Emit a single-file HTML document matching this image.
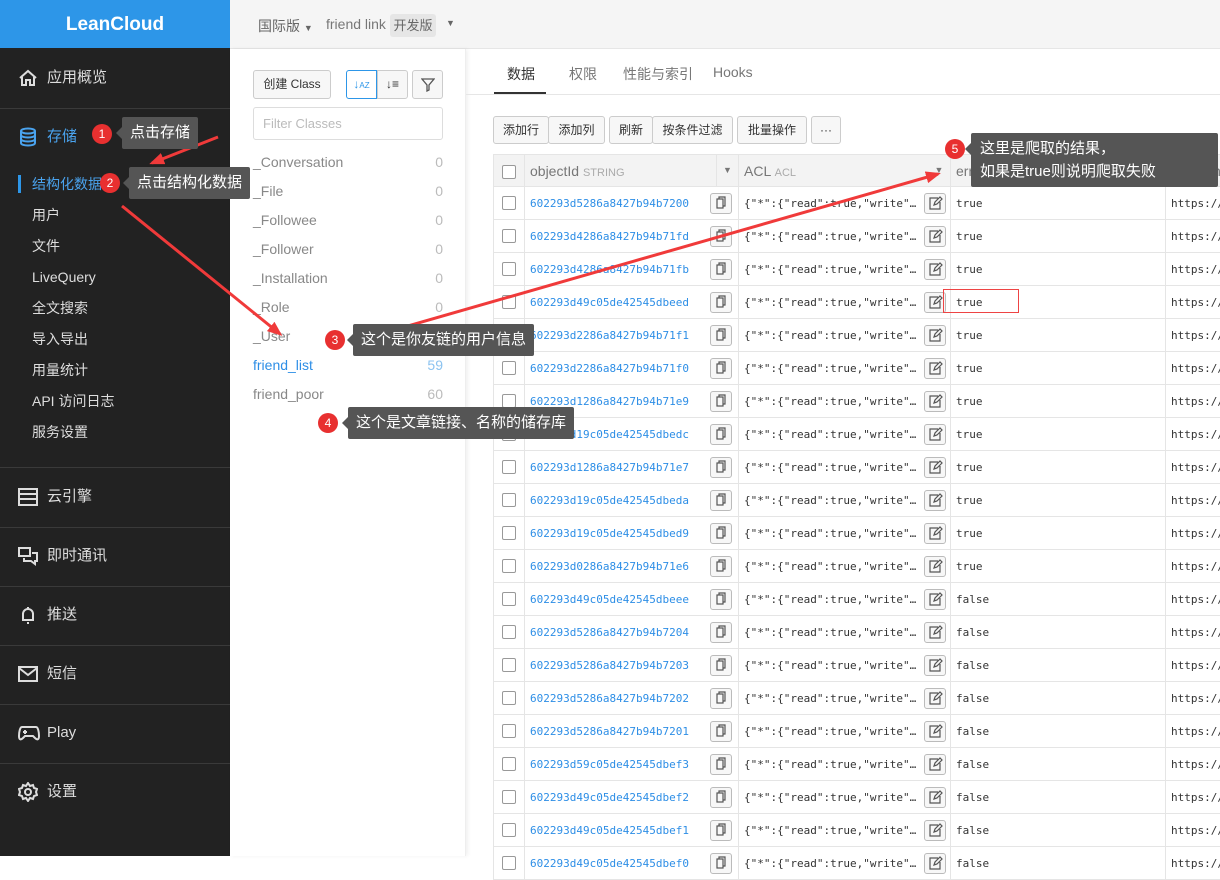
<!DOCTYPE html>
<html><head><meta charset="utf-8"><style>
*{box-sizing:border-box;margin:0;padding:0}
body{width:1220px;height:856px;overflow:hidden;position:relative;font-family:"Liberation Sans","Noto Sans CJK SC",sans-serif;background:#fff;font-size:14px}
.a{position:absolute}
#side{left:0;top:0;width:230px;height:856px;background:#222}
#logo{left:0;top:0;width:230px;height:48px;background:#2d96e8;color:#fff;font-weight:bold;font-size:19px;text-align:center;line-height:50px}
.mi{left:0;width:230px;color:#ddd;font-size:15px;height:20px;line-height:20px}
.mi svg{position:absolute;left:18px;top:0}
.mi span{position:absolute;left:47px}
.dv{left:0;width:230px;height:1px;background:#3a3a3a}
.si{left:32px;color:#ddd;font-size:14px;line-height:18px}
#top{left:230px;top:0;width:990px;height:49px;background:#f5f5f5;border-bottom:1px solid #e6e6e6;color:#666;font-size:14px}
#cp{left:230px;top:49px;width:236px;height:807px;background:#fff;box-shadow:2px 0 4px rgba(0,0,0,.06);border-right:1px solid #eee}
.btn{border:1px solid #ccc;border-radius:3px;background:#f7f7f7;color:#333;font-size:12px;text-align:center;line-height:26px;height:28px}
.cl{left:253px;color:#888;font-size:14px}
.cn{left:420px;width:23px;text-align:right;color:#bbb;font-size:14px}
.tab{top:64px;color:#777;font-size:14px}
table{border-collapse:collapse;position:absolute;left:493px;top:154px;font-size:11px;table-layout:fixed;width:760px}
td{border:1px solid #e5e5e5;height:33px;padding:0 5px;white-space:nowrap;overflow:hidden;position:relative}
th{border:1px solid #e5e5e5;height:32px;background:#f3f3f3;font-weight:normal;text-align:left;padding:0 5px;color:#777;font-size:14px;position:relative;white-space:nowrap;overflow:hidden}
.cb{width:14px;height:14px;border:1px solid #999;border-radius:2px;display:inline-block;vertical-align:middle;background:#fff}
.id{color:#2d8ee6;font-family:"DejaVu Sans Mono","Liberation Mono",monospace;font-size:11px}
.mono{font-family:"DejaVu Sans Mono","Liberation Mono",monospace;font-size:11px;color:#333}
.ib{position:absolute;right:6px;top:6px;width:22px;height:21px;border:1px solid #bbb;border-radius:3px;background:#f7f7f7}
.co{background:#555;color:#fff;font-size:15px;line-height:32px;padding:0 8px;border-radius:2px}
.co:before{content:"";position:absolute;left:-6px;top:10px;border:6px solid transparent;border-left:0;border-right-color:#555}
.num{width:20px;height:20px;border-radius:50%;background:#e83030;color:#fff;font-size:12px;text-align:center;line-height:20px}
</style></head><body>
<div id="side" class="a"></div>
<div id="logo" class="a">LeanCloud</div>
<div class="a mi" style="top:68px"><svg width="20" height="20" viewBox="0 0 20 20" fill="none" stroke="#ddd" stroke-width="2"><path d="M2 10L10 3l8 7M4 9v8h4v-5h4v5h4V9"/></svg><span>应用概览</span></div>
<div class="a dv" style="top:108px"></div>
<div class="a mi" style="top:127px;color:#4aa3ee"><svg width="20" height="20" viewBox="0 0 20 20" fill="none" stroke="#4aa3ee" stroke-width="2"><ellipse cx="10" cy="4" rx="7" ry="2.5"/><path d="M3 4v12c0 1.5 3 2.5 7 2.5s7-1 7-2.5V4M3 8c0 1.5 3 2.5 7 2.5s7-1 7-2.5M3 12c0 1.5 3 2.5 7 2.5s7-1 7-2.5"/></svg><span>存储</span></div>
<div class="a" style="left:18px;top:175px;width:3px;height:18px;background:#2d96e8"></div>
<div class="a si" style="top:175px;color:#4aa3ee">结构化数据</div>
<div class="a si" style="top:206px">用户</div>
<div class="a si" style="top:237px">文件</div>
<div class="a si" style="top:268px">LiveQuery</div>
<div class="a si" style="top:299px">全文搜索</div>
<div class="a si" style="top:330px">导入导出</div>
<div class="a si" style="top:361px">用量统计</div>
<div class="a si" style="top:392px">API 访问日志</div>
<div class="a si" style="top:423px">服务设置</div>
<div class="a dv" style="top:467px"></div>
<div class="a mi" style="top:487px"><svg width="20" height="20" viewBox="0 0 20 20" fill="none" stroke="#ddd" stroke-width="2"><rect x="1" y="2" width="18" height="16"/><path d="M1 7h18M1 12h18"/></svg><span>云引擎</span></div>
<div class="a dv" style="top:527px"></div>
<div class="a mi" style="top:546px"><svg width="20" height="20" viewBox="0 0 20 20" fill="none" stroke="#ddd" stroke-width="2"><rect x="1" y="2" width="11" height="8"/><path d="M6 12v3h7l4 3v-3h2V7h-5"/></svg><span>即时通讯</span></div>
<div class="a dv" style="top:586px"></div>
<div class="a mi" style="top:605px"><svg width="20" height="20" viewBox="0 0 20 20" fill="none" stroke="#ddd" stroke-width="2"><path d="M5 15V9a5 5 0 0 1 10 0v6H4h12M9 18h2M10 2v2"/></svg><span>推送</span></div>
<div class="a dv" style="top:645px"></div>
<div class="a mi" style="top:664px"><svg width="20" height="20" viewBox="0 0 20 20" fill="none" stroke="#ddd" stroke-width="2"><rect x="1" y="3" width="18" height="14"/><path d="M1 4l9 7 9-7"/></svg><span>短信</span></div>
<div class="a dv" style="top:704px"></div>
<div class="a mi" style="top:723px"><svg width="22" height="20" viewBox="0 0 22 20" fill="none" stroke="#ddd" stroke-width="2"><path d="M4 4h14c2 0 3 5 3 9s-2 4-4 2l-2-2H7l-2 2c-2 2-4 2-4-2s1-9 3-9zM5 9h4M7 7v4"/></svg><span>Play</span></div>
<div class="a dv" style="top:763px"></div>
<div class="a mi" style="top:782px"><svg width="20" height="20" viewBox="0 0 20 20" fill="none" stroke="#ddd" stroke-width="2"><circle cx="10" cy="10" r="3"/><path d="M10 1l2 3 3-1 1 3 3 1-1 3 1 3-3 1-1 3-3-1-2 3-2-3-3 1-1-3-3-1 1-3-1-3 3-1 1-3 3 1z"/></svg><span>设置</span></div>

<div id="top" class="a"></div>
<div class="a" style="left:258px;top:16px;color:#666;font-size:14px">国际版 <span style="font-size:9px">▼</span></div>
<div class="a" style="left:326px;top:16px;color:#777;font-size:14px">friend link</div>
<div class="a" style="left:390px;top:14px;width:46px;height:23px;background:#e6e6e6;border-radius:3px;color:#666;font-size:13px;text-align:center;line-height:23px">开发版</div>
<div class="a" style="left:446px;top:18px;font-size:9px;color:#666">▼</div>

<div id="cp" class="a"></div>
<div class="a btn" style="left:253px;top:70px;width:78px;height:29px;line-height:27px">创建 Class</div>
<div class="a btn" style="left:346px;top:70px;width:31px;height:29px;border-color:#2d96e8;background:#fff;color:#2d96e8;border-radius:3px 0 0 3px">↓<span style="font-size:8px">AZ</span></div>
<div class="a btn" style="left:377px;top:70px;width:31px;height:29px;border-radius:0 3px 3px 0">↓≡</div>
<div class="a btn" style="left:412px;top:70px;width:31px;height:29px"><svg width="14" height="14" viewBox="0 0 14 14" style="margin-top:7px" fill="none" stroke="#555" stroke-width="1.3"><path d="M1 1h12L8 7v5L6 13V7z"/></svg></div>
<div class="a" style="left:253px;top:107px;width:190px;height:33px;border:1px solid #ddd;border-radius:3px;color:#bbb;font-size:13px;line-height:31px;padding-left:9px">Filter Classes</div>
<div class="a cl" style="top:154px">_Conversation</div><div class="a cn" style="top:154px">0</div>
<div class="a cl" style="top:183px">_File</div><div class="a cn" style="top:183px">0</div>
<div class="a cl" style="top:212px">_Followee</div><div class="a cn" style="top:212px">0</div>
<div class="a cl" style="top:241px">_Follower</div><div class="a cn" style="top:241px">0</div>
<div class="a cl" style="top:270px">_Installation</div><div class="a cn" style="top:270px">0</div>
<div class="a cl" style="top:299px">_Role</div><div class="a cn" style="top:299px">0</div>
<div class="a cl" style="top:328px">_User</div><div class="a cn" style="top:328px">0</div>
<div class="a cl" style="top:357px;color:#2d8ee6">friend_list</div><div class="a cn" style="top:357px;color:#8cc3f0">59</div>
<div class="a cl" style="top:386px">friend_poor</div><div class="a cn" style="top:386px">60</div>

<div class="a tab" style="left:507px;color:#333">数据</div>
<div class="a" style="left:494px;top:92px;width:52px;height:2px;background:#333"></div>
<div class="a tab" style="left:569px">权限</div>
<div class="a tab" style="left:623px">性能与索引</div>
<div class="a tab" style="left:713px">Hooks</div>
<div class="a" style="left:466px;top:94px;width:754px;height:1px;background:#e6e6e6"></div>

<div class="a btn" style="left:493px;top:116px;width:56px">添加行</div>
<div class="a btn" style="left:548px;top:116px;width:57px">添加列</div>
<div class="a btn" style="left:609px;top:116px;width:44px">刷新</div>
<div class="a btn" style="left:652px;top:116px;width:81px">按条件过滤</div>
<div class="a btn" style="left:737px;top:116px;width:70px">批量操作</div>
<div class="a btn" style="left:811px;top:116px;width:30px">···</div>

<table>
<colgroup><col style="width:31px"><col style="width:214px"><col style="width:212px"><col style="width:215px"><col style="width:88px"></colgroup>
<tr><th style="text-align:center"><span class="cb"></span></th><th>objectId <span style="font-size:11px;color:#aaa">STRING</span><span style="position:absolute;right:0;top:0;width:22px;height:31px;border-left:1px solid #e5e5e5;font-size:9px;line-height:31px;text-align:center">▼</span></th><th>ACL <span style="font-size:11px;color:#aaa">ACL</span><span style="position:absolute;right:0;top:0;width:22px;height:31px;font-size:9px;line-height:31px;text-align:center">▼</span></th><th>error</th><th>firendimg</th></tr>
<tbody id="tb"></tbody>
</table>
<script>
var ids=["602293d5286a8427b94b7200","602293d4286a8427b94b71fd","602293d4286a8427b94b71fb","602293d49c05de42545dbeed","602293d2286a8427b94b71f1","602293d2286a8427b94b71f0","602293d1286a8427b94b71e9","602293d19c05de42545dbedc","602293d1286a8427b94b71e7","602293d19c05de42545dbeda","602293d19c05de42545dbed9","602293d0286a8427b94b71e6","602293d49c05de42545dbeee","602293d5286a8427b94b7204","602293d5286a8427b94b7203","602293d5286a8427b94b7202","602293d5286a8427b94b7201","602293d59c05de42545dbef3","602293d49c05de42545dbef2","602293d49c05de42545dbef1","602293d49c05de42545dbef0"];
var h="";
var cp='<span class="ib"><svg width="20" height="19" viewBox="0 0 20 19" fill="none" stroke="#555" stroke-width="1.2"><rect x="6" y="5" width="6" height="9"/><path d="M8 5V3h6v9h-2"/></svg></span>';
var ed='<span class="ib" style="right:4px"><svg width="20" height="19" viewBox="0 0 20 19" fill="none" stroke="#555" stroke-width="1.2"><path d="M13 4H5v11h10V8M9 11l1-3 5-5 2 2-5 5z"/></svg></span>';
ids.forEach(function(id,i){h+='<tr><td style="text-align:center"><span class="cb"></span></td><td><span class="id">'+id+'</span>'+cp+'</td><td><span class="mono">{"*":{"read":true,"write"…</span>'+ed+'</td><td><span class="mono">'+(i<12?'true':'false')+'</span></td><td><span class="mono">https://</span></td></tr>'});
document.getElementById('tb').innerHTML=h;
</script>
<div class="a" style="left:943px;top:289px;width:76px;height:24px;border:1px solid #e44"></div>

<svg class="a" style="left:0;top:0" width="1220" height="856">
<defs><marker id="ah" markerWidth="5" markerHeight="4" refX="4" refY="2" orient="auto"><path d="M0 0L5 2 0 4z" fill="#f03a3a"/></marker></defs>
<g stroke="#f03a3a" stroke-width="3" fill="none" marker-end="url(#ah)">
<line x1="218" y1="137" x2="152" y2="163"/>
<line x1="122" y1="206" x2="280" y2="334"/>
<line x1="352" y1="342" x2="938" y2="174"/>
</g></svg>

<div class="a num" style="left:92px;top:124px">1</div>
<div class="a co" style="left:122px;top:117px">点击存储</div>
<div class="a num" style="left:100px;top:173px">2</div>
<div class="a co" style="left:129px;top:167px">点击结构化数据</div>
<div class="a num" style="left:325px;top:330px">3</div>
<div class="a co" style="left:353px;top:324px">这个是你友链的用户信息</div>
<div class="a num" style="left:318px;top:413px">4</div>
<div class="a co" style="left:348px;top:407px">这个是文章链接、名称的储存库</div>
<div class="a num" style="left:945px;top:139px">5</div>
<div class="a co" style="left:971px;top:133px;width:247px;line-height:23px;padding:4px 8px 4px 9px">这里是爬取的结果，<br>如果是true则说明爬取失败</div>
</body></html>
